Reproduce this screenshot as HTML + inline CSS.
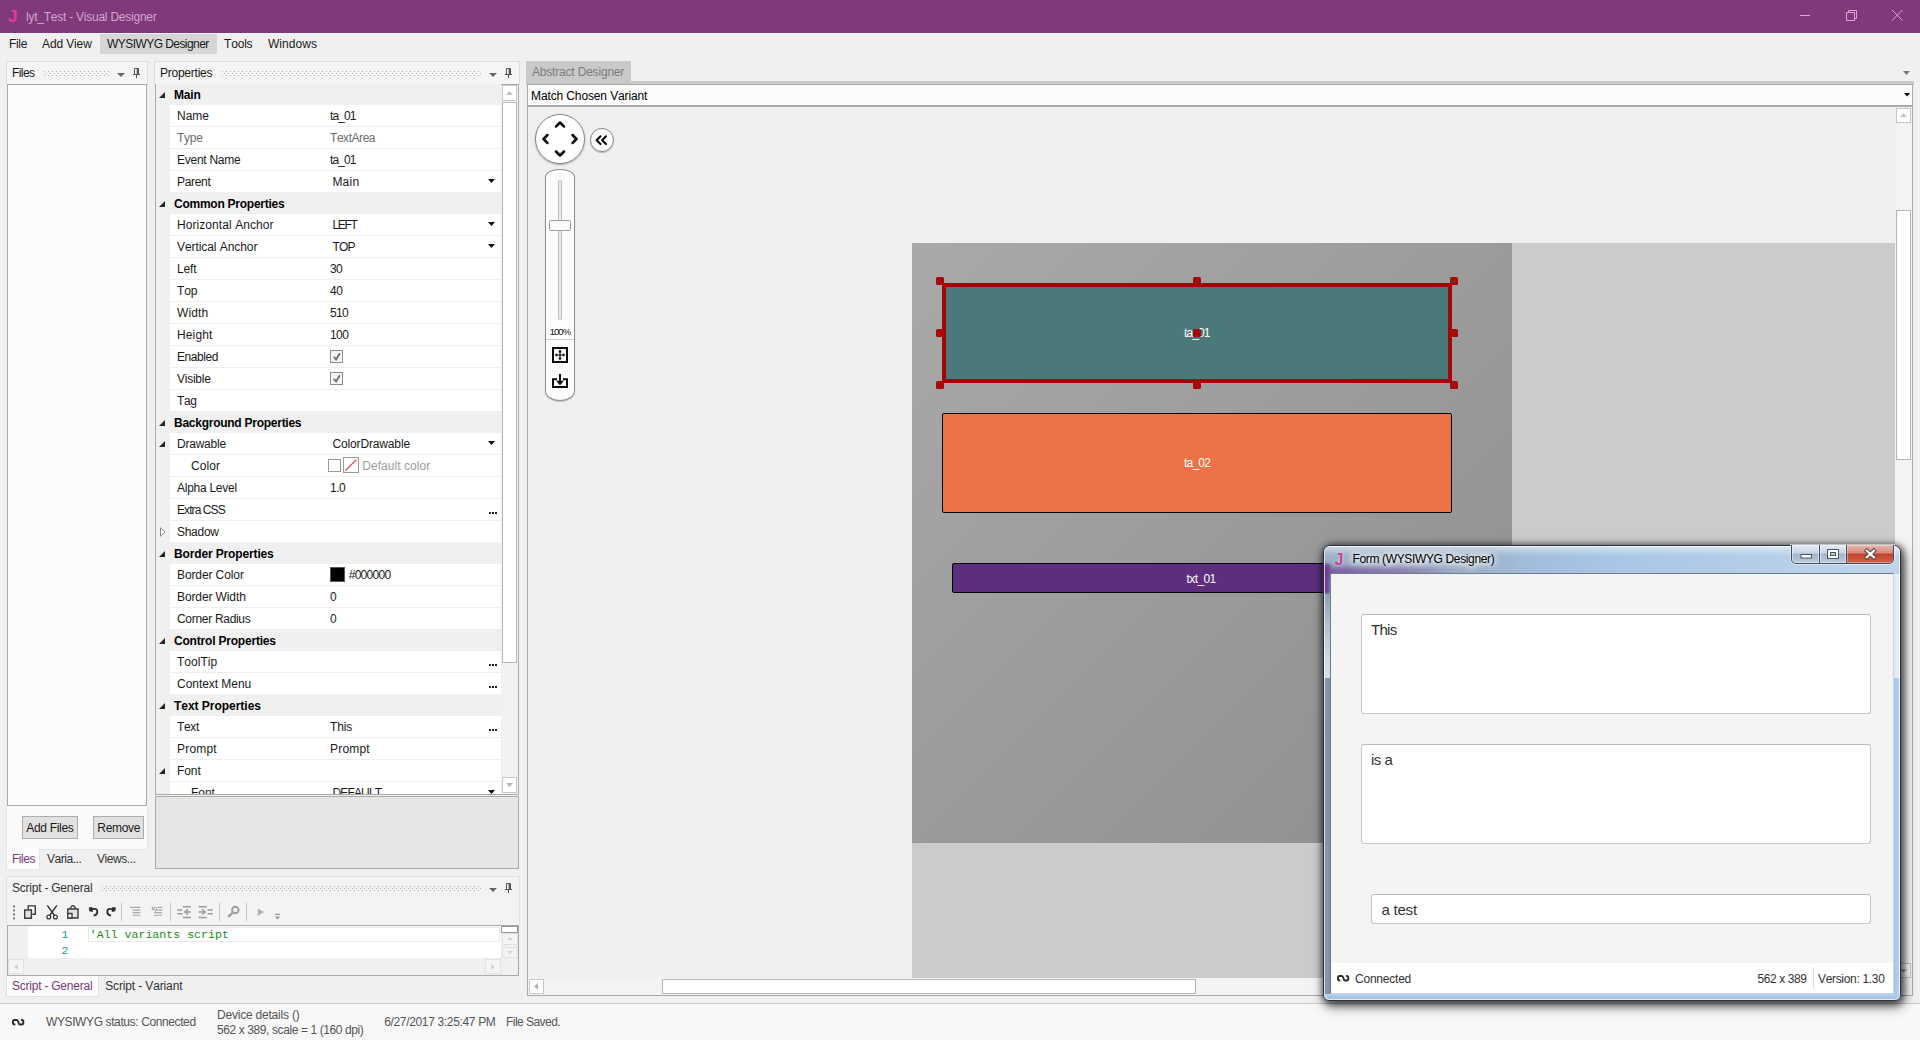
<!DOCTYPE html>
<html lang="en"><head><meta charset="utf-8"><title>lyt_Test - Visual Designer</title>
<style>
html,body{margin:0;padding:0;}
body{width:1920px;height:1040px;overflow:hidden;background:#f0f0f0;position:relative;
 font-family:"Liberation Sans",sans-serif;font-size:12px;color:#1a1a1a;font-kerning:none;}
.t{position:absolute;white-space:pre;font-kerning:none;}
div{box-sizing:border-box;}
svg{position:absolute;overflow:visible;}

</style></head>
<body>
<div style="position:absolute;left:0px;top:0px;width:1920px;height:33px;background:#80397b;"></div>
<div style="position:absolute;left:0px;top:33px;width:1920px;height:1px;background:#f8f3f7;"></div>
<span class="t" style="left:8.00px;top:7.00px;line-height:20px;font-size:17px;font-weight:bold;color:#e6399f;">J</span>
<span class="t" style="left:26.00px;top:8.60px;line-height:16px;color:#d5a4d0;letter-spacing:-0.239px;">lyt_Test - Visual Designer</span>
<svg style="left:1790px;top:0" width="130" height="33" viewBox="0 0 130 33" fill="none" stroke="#dca6d8" stroke-width="1"><path d="M10 15.5H20"/><path d="M56.5 12.5H64.5V20.5H56.5Z"/><path d="M58.5 12.5V10.5H66.5V18.5H64.5"/><path d="M102 10L112.5 20.5M112.5 10L102 20.5"/></svg>
<div style="position:absolute;left:100px;top:34px;width:117px;height:20px;background:#d6d6d6;"></div>
<span class="t" style="left:9.00px;top:36.00px;line-height:16px;letter-spacing:-0.328px;">File</span>
<span class="t" style="left:42.00px;top:36.00px;line-height:16px;letter-spacing:-0.125px;">Add View</span>
<span class="t" style="left:107.00px;top:36.00px;line-height:16px;letter-spacing:-0.562px;">WYSIWYG Designer</span>
<span class="t" style="left:224.00px;top:36.00px;line-height:16px;letter-spacing:-0.183px;">Tools</span>
<span class="t" style="left:268.00px;top:36.00px;line-height:16px;letter-spacing:0.036px;">Windows</span>
<svg width="0" height="0" style="left:0;top:0"><defs><pattern id="gp" width="4" height="4" patternUnits="userSpaceOnUse"><rect x="0" y="0" width="1" height="1" fill="#b2b2b2"/><rect x="2" y="2" width="1" height="1" fill="#b2b2b2"/></pattern></defs></svg>
<div style="position:absolute;left:6px;top:61px;width:142px;height:24px;background:#f5f5f5;border:1px solid #dedede;"></div>
<span class="t" style="left:12.00px;top:65.00px;line-height:16px;letter-spacing:-0.562px;">Files</span>
<svg style="left:44px;top:71px" width="66" height="5"><rect width="66" height="5" fill="url(#gp)"/></svg>
<svg style="left:117.3px;top:73px" width="8" height="4" viewBox="0 0 8 4"><path d="M0 0H8L4.0 4Z" fill="#666"/></svg>
<svg style="left:133px;top:68px" width="8" height="11" viewBox="0 0 8 11" fill="none" stroke="#555" stroke-width="1"><path d="M1.5 0.5H5.5V6.5H1.5Z" fill="none"/><path d="M4.5 0.5V6.5" stroke-width="1.6"/><path d="M0 6.5H7"/><path d="M3.5 7V10.200"/></svg>
<div style="position:absolute;left:7px;top:84px;width:140px;height:722px;background:#fcfcfc;border:1px solid #a9a9a9;"></div>
<div style="position:absolute;left:6px;top:806px;width:142px;height:44px;background:#fafafa;border:1px solid #e6e6e6;border-top:none;"></div>
<div style="position:absolute;left:22px;top:816px;width:56px;height:23px;background:#e1e1e1;border:1px solid #adadad;"></div>
<span class="t" style="left:26.30px;top:819.50px;line-height:16px;letter-spacing:-0.317px;">Add Files</span>
<div style="position:absolute;left:93px;top:816px;width:51px;height:23px;background:#e1e1e1;border:1px solid #adadad;"></div>
<span class="t" style="left:97.30px;top:819.50px;line-height:16px;letter-spacing:-0.302px;">Remove</span>
<div style="position:absolute;left:6px;top:849px;width:34px;height:21px;background:#fdfdfd;border:1px solid #e6e6e6;border-top:none;"></div>
<span class="t" style="left:12.00px;top:851.00px;line-height:16px;color:#7a3a78;letter-spacing:-0.463px;">Files</span>
<span class="t" style="left:47.00px;top:851.00px;line-height:16px;color:#333;letter-spacing:-0.454px;">Varia...</span>
<span class="t" style="left:97.00px;top:851.00px;line-height:16px;color:#333;letter-spacing:-0.436px;">Views...</span>
<div style="position:absolute;left:154px;top:61px;width:366px;height:24px;background:#f5f5f5;border:1px solid #dedede;"></div>
<span class="t" style="left:160.00px;top:65.00px;line-height:16px;letter-spacing:-0.244px;">Properties</span>
<svg style="left:222px;top:71px" width="260" height="5"><rect width="260" height="5" fill="url(#gp)"/></svg>
<svg style="left:488.5px;top:73px" width="8" height="4" viewBox="0 0 8 4"><path d="M0 0H8L4.0 4Z" fill="#666"/></svg>
<svg style="left:505px;top:68px" width="8" height="11" viewBox="0 0 8 11" fill="none" stroke="#555" stroke-width="1"><path d="M1.5 0.5H5.5V6.5H1.5Z" fill="none"/><path d="M4.5 0.5V6.5" stroke-width="1.6"/><path d="M0 6.5H7"/><path d="M3.5 7V10.200"/></svg>
<div style="position:absolute;left:155px;top:84px;width:364px;height:711px;background:#f0f0f0;border:1px solid #a9a9a9;"></div>
<div style="position:absolute;left:0px;top:0px;width:1920px;height:795px;overflow:hidden;background:none;pointer-events:none;"><div style="position:absolute;left:156px;top:84px;width:345px;height:21px;background:#f0f0f0;"></div><svg style="left:159px;top:92px" width="6" height="6" viewBox="0 0 6 6"><path d="M6 0V6H0Z" fill="#262626"/></svg><span class="t" style="left:174.00px;top:87.00px;line-height:16px;font-weight:bold;color:#000;letter-spacing:-0.169px;">Main</span><div style="position:absolute;left:170px;top:105px;width:331px;height:22px;background:#fff;border-bottom:1px solid #efefef;"></div><span class="t" style="left:177.00px;top:108.00px;line-height:16px;color:#1a1a1a;letter-spacing:-0.016px;">Name</span><span class="t" style="left:330.00px;top:108.00px;line-height:16px;color:#1a1a1a;letter-spacing:-0.875px;">ta_01</span><div style="position:absolute;left:170px;top:127px;width:331px;height:22px;background:#fff;border-bottom:1px solid #efefef;"></div><span class="t" style="left:177.00px;top:130.00px;line-height:16px;color:#6d6d6d;letter-spacing:-0.275px;">Type</span><span class="t" style="left:330.00px;top:130.00px;line-height:16px;color:#6d6d6d;letter-spacing:-0.452px;">TextArea</span><div style="position:absolute;left:170px;top:149px;width:331px;height:22px;background:#fff;border-bottom:1px solid #efefef;"></div><span class="t" style="left:177.00px;top:152.00px;line-height:16px;color:#1a1a1a;letter-spacing:-0.267px;">Event Name</span><span class="t" style="left:330.00px;top:152.00px;line-height:16px;color:#1a1a1a;letter-spacing:-0.875px;">ta_01</span><div style="position:absolute;left:170px;top:171px;width:331px;height:22px;background:#fff;border-bottom:1px solid #efefef;"></div><span class="t" style="left:177.00px;top:174.00px;line-height:16px;color:#1a1a1a;letter-spacing:-0.321px;">Parent</span><span class="t" style="left:332.40px;top:174.00px;line-height:16px;letter-spacing:0.234px;">Main</span><svg style="left:488px;top:179px" width="7" height="4" viewBox="0 0 7 4"><path d="M0 0H7L3.5 4Z" fill="#111"/></svg><div style="position:absolute;left:156px;top:193px;width:345px;height:21px;background:#f0f0f0;"></div><svg style="left:159px;top:201px" width="6" height="6" viewBox="0 0 6 6"><path d="M6 0V6H0Z" fill="#262626"/></svg><span class="t" style="left:174.00px;top:196.00px;line-height:16px;font-weight:bold;color:#000;letter-spacing:-0.249px;">Common Properties</span><div style="position:absolute;left:170px;top:214px;width:331px;height:22px;background:#fff;border-bottom:1px solid #efefef;"></div><span class="t" style="left:177.00px;top:217.00px;line-height:16px;color:#1a1a1a;letter-spacing:0.071px;">Horizontal Anchor</span><span class="t" style="left:332.40px;top:217.00px;line-height:16px;letter-spacing:-1.284px;">LEFT</span><svg style="left:488px;top:222px" width="7" height="4" viewBox="0 0 7 4"><path d="M0 0H7L3.5 4Z" fill="#111"/></svg><div style="position:absolute;left:170px;top:236px;width:331px;height:22px;background:#fff;border-bottom:1px solid #efefef;"></div><span class="t" style="left:177.00px;top:239.00px;line-height:16px;color:#1a1a1a;letter-spacing:-0.068px;">Vertical Anchor</span><span class="t" style="left:332.40px;top:239.00px;line-height:16px;letter-spacing:-0.816px;">TOP</span><svg style="left:488px;top:244px" width="7" height="4" viewBox="0 0 7 4"><path d="M0 0H7L3.5 4Z" fill="#111"/></svg><div style="position:absolute;left:170px;top:258px;width:331px;height:22px;background:#fff;border-bottom:1px solid #efefef;"></div><span class="t" style="left:177.00px;top:261.00px;line-height:16px;color:#1a1a1a;letter-spacing:-0.138px;">Left</span><span class="t" style="left:330.00px;top:261.00px;line-height:16px;color:#1a1a1a;letter-spacing:-0.600px;">30</span><div style="position:absolute;left:170px;top:280px;width:331px;height:22px;background:#fff;border-bottom:1px solid #efefef;"></div><span class="t" style="left:177.00px;top:283.00px;line-height:16px;color:#1a1a1a;letter-spacing:-0.164px;">Top</span><span class="t" style="left:330.00px;top:283.00px;line-height:16px;color:#1a1a1a;letter-spacing:-0.450px;">40</span><div style="position:absolute;left:170px;top:302px;width:331px;height:22px;background:#fff;border-bottom:1px solid #efefef;"></div><span class="t" style="left:177.00px;top:305.00px;line-height:16px;color:#1a1a1a;letter-spacing:0.110px;">Width</span><span class="t" style="left:330.00px;top:305.00px;line-height:16px;color:#1a1a1a;letter-spacing:-0.650px;">510</span><div style="position:absolute;left:170px;top:324px;width:331px;height:22px;background:#fff;border-bottom:1px solid #efefef;"></div><span class="t" style="left:177.00px;top:327.00px;line-height:16px;color:#1a1a1a;letter-spacing:0.138px;">Height</span><span class="t" style="left:330.00px;top:327.00px;line-height:16px;color:#1a1a1a;letter-spacing:-0.550px;">100</span><div style="position:absolute;left:170px;top:346px;width:331px;height:22px;background:#fff;border-bottom:1px solid #efefef;"></div><span class="t" style="left:177.00px;top:349.00px;line-height:16px;color:#1a1a1a;letter-spacing:-0.448px;">Enabled</span><div style="position:absolute;left:330px;top:350px;width:13px;height:13px;background:#f4f4f4;border:1px solid #8e8e8e;"></div><svg style="left:332px;top:352px" width="10" height="10" viewBox="0 0 10 10"><path d="M1.800 4.800L4.100 7.400L7.800 1.200" fill="none" stroke="#707070" stroke-width="1.900"/></svg><div style="position:absolute;left:170px;top:368px;width:331px;height:22px;background:#fff;border-bottom:1px solid #efefef;"></div><span class="t" style="left:177.00px;top:371.00px;line-height:16px;color:#1a1a1a;letter-spacing:-0.248px;">Visible</span><div style="position:absolute;left:330px;top:372px;width:13px;height:13px;background:#f4f4f4;border:1px solid #8e8e8e;"></div><svg style="left:332px;top:374px" width="10" height="10" viewBox="0 0 10 10"><path d="M1.800 4.800L4.100 7.400L7.800 1.200" fill="none" stroke="#707070" stroke-width="1.900"/></svg><div style="position:absolute;left:170px;top:390px;width:331px;height:22px;background:#fff;border-bottom:1px solid #efefef;"></div><span class="t" style="left:177.00px;top:393.00px;line-height:16px;color:#1a1a1a;letter-spacing:-0.364px;">Tag</span><div style="position:absolute;left:156px;top:412px;width:345px;height:21px;background:#f0f0f0;"></div><svg style="left:159px;top:420px" width="6" height="6" viewBox="0 0 6 6"><path d="M6 0V6H0Z" fill="#262626"/></svg><span class="t" style="left:174.00px;top:415.00px;line-height:16px;font-weight:bold;color:#000;letter-spacing:-0.258px;">Background Properties</span><div style="position:absolute;left:170px;top:433px;width:331px;height:22px;background:#fff;border-bottom:1px solid #efefef;"></div><span class="t" style="left:177.00px;top:436.00px;line-height:16px;color:#1a1a1a;letter-spacing:-0.227px;">Drawable</span><span class="t" style="left:332.40px;top:436.00px;line-height:16px;letter-spacing:-0.138px;">ColorDrawable</span><svg style="left:488px;top:441px" width="7" height="4" viewBox="0 0 7 4"><path d="M0 0H7L3.5 4Z" fill="#111"/></svg><svg style="left:159px;top:441px" width="6" height="6" viewBox="0 0 6 6"><path d="M6 0V6H0Z" fill="#262626"/></svg><div style="position:absolute;left:170px;top:455px;width:331px;height:22px;background:#fff;border-bottom:1px solid #efefef;"></div><span class="t" style="left:191.00px;top:458.00px;line-height:16px;color:#1a1a1a;letter-spacing:0.062px;">Color</span><div style="position:absolute;left:328px;top:459px;width:13px;height:13px;background:#fff;border:1px solid #9a9a9a;"></div><div style="position:absolute;left:343px;top:457px;width:16px;height:16px;background:#fff;border:1px solid #9a9a9a;"></div><svg style="left:344px;top:458px" width="14" height="14" viewBox="0 0 14 14"><path d="M1.5 12.5L12.5 1.5" stroke="#e8414d" stroke-width="1.1"/></svg><span class="t" style="left:362.30px;top:458.00px;line-height:16px;color:#9d9d9d;letter-spacing:0.047px;">Default color</span><div style="position:absolute;left:170px;top:477px;width:331px;height:22px;background:#fff;border-bottom:1px solid #efefef;"></div><span class="t" style="left:177.00px;top:480.00px;line-height:16px;color:#1a1a1a;letter-spacing:-0.263px;">Alpha Level</span><span class="t" style="left:330.00px;top:480.00px;line-height:16px;color:#1a1a1a;letter-spacing:-0.525px;">1.0</span><div style="position:absolute;left:170px;top:499px;width:331px;height:22px;background:#fff;border-bottom:1px solid #efefef;"></div><span class="t" style="left:177.00px;top:502.00px;line-height:16px;color:#1a1a1a;letter-spacing:-0.917px;">Extra CSS</span><div style="position:absolute;left:489px;top:512px;width:2px;height:2px;background:#222;"></div><div style="position:absolute;left:492px;top:512px;width:2px;height:2px;background:#222;"></div><div style="position:absolute;left:495px;top:512px;width:2px;height:2px;background:#222;"></div><div style="position:absolute;left:170px;top:521px;width:331px;height:22px;background:#fff;border-bottom:1px solid #efefef;"></div><span class="t" style="left:177.00px;top:524.00px;line-height:16px;color:#1a1a1a;letter-spacing:-0.281px;">Shadow</span><svg style="left:160px;top:527px" width="6" height="10" viewBox="0 0 6 10"><path d="M0.5 0.8L5 5L0.5 9.2Z" fill="#fff" stroke="#8a8a8a" stroke-width="1"/></svg><div style="position:absolute;left:156px;top:543px;width:345px;height:21px;background:#f0f0f0;"></div><svg style="left:159px;top:551px" width="6" height="6" viewBox="0 0 6 6"><path d="M6 0V6H0Z" fill="#262626"/></svg><span class="t" style="left:174.00px;top:546.00px;line-height:16px;font-weight:bold;color:#000;letter-spacing:-0.140px;">Border Properties</span><div style="position:absolute;left:170px;top:564px;width:331px;height:22px;background:#fff;border-bottom:1px solid #efefef;"></div><span class="t" style="left:177.00px;top:567.00px;line-height:16px;color:#1a1a1a;letter-spacing:-0.104px;">Border Color</span><div style="position:absolute;left:330px;top:567px;width:15px;height:15px;background:#000;border:1px solid #555;"></div><span class="t" style="left:348.70px;top:567.00px;line-height:16px;letter-spacing:-0.707px;">#000000</span><div style="position:absolute;left:170px;top:586px;width:331px;height:22px;background:#fff;border-bottom:1px solid #efefef;"></div><span class="t" style="left:177.00px;top:589.00px;line-height:16px;color:#1a1a1a;letter-spacing:-0.109px;">Border Width</span><span class="t" style="left:330.00px;top:589.00px;line-height:16px;color:#1a1a1a;letter-spacing:-0.450px;">0</span><div style="position:absolute;left:170px;top:608px;width:331px;height:22px;background:#fff;border-bottom:1px solid #efefef;"></div><span class="t" style="left:177.00px;top:611.00px;line-height:16px;color:#1a1a1a;letter-spacing:-0.302px;">Corner Radius</span><span class="t" style="left:330.00px;top:611.00px;line-height:16px;color:#1a1a1a;letter-spacing:-0.450px;">0</span><div style="position:absolute;left:156px;top:630px;width:345px;height:21px;background:#f0f0f0;"></div><svg style="left:159px;top:638px" width="6" height="6" viewBox="0 0 6 6"><path d="M6 0V6H0Z" fill="#262626"/></svg><span class="t" style="left:174.00px;top:633.00px;line-height:16px;font-weight:bold;color:#000;letter-spacing:-0.198px;">Control Properties</span><div style="position:absolute;left:170px;top:651px;width:331px;height:22px;background:#fff;border-bottom:1px solid #efefef;"></div><span class="t" style="left:177.00px;top:654.00px;line-height:16px;color:#1a1a1a;letter-spacing:0.029px;">ToolTip</span><div style="position:absolute;left:489px;top:664px;width:2px;height:2px;background:#222;"></div><div style="position:absolute;left:492px;top:664px;width:2px;height:2px;background:#222;"></div><div style="position:absolute;left:495px;top:664px;width:2px;height:2px;background:#222;"></div><div style="position:absolute;left:170px;top:673px;width:331px;height:22px;background:#fff;border-bottom:1px solid #efefef;"></div><span class="t" style="left:177.00px;top:676.00px;line-height:16px;color:#1a1a1a;letter-spacing:-0.041px;">Context Menu</span><div style="position:absolute;left:489px;top:686px;width:2px;height:2px;background:#222;"></div><div style="position:absolute;left:492px;top:686px;width:2px;height:2px;background:#222;"></div><div style="position:absolute;left:495px;top:686px;width:2px;height:2px;background:#222;"></div><div style="position:absolute;left:156px;top:695px;width:345px;height:21px;background:#f0f0f0;"></div><svg style="left:159px;top:703px" width="6" height="6" viewBox="0 0 6 6"><path d="M6 0V6H0Z" fill="#262626"/></svg><span class="t" style="left:174.00px;top:698.00px;line-height:16px;font-weight:bold;color:#000;letter-spacing:-0.029px;">Text Properties</span><div style="position:absolute;left:170px;top:716px;width:331px;height:22px;background:#fff;border-bottom:1px solid #efefef;"></div><span class="t" style="left:177.00px;top:719.00px;line-height:16px;color:#1a1a1a;letter-spacing:-0.354px;">Text</span><span class="t" style="left:330.00px;top:719.00px;line-height:16px;color:#1a1a1a;letter-spacing:-0.172px;">This</span><div style="position:absolute;left:489px;top:729px;width:2px;height:2px;background:#222;"></div><div style="position:absolute;left:492px;top:729px;width:2px;height:2px;background:#222;"></div><div style="position:absolute;left:495px;top:729px;width:2px;height:2px;background:#222;"></div><div style="position:absolute;left:170px;top:738px;width:331px;height:22px;background:#fff;border-bottom:1px solid #efefef;"></div><span class="t" style="left:177.00px;top:741.00px;line-height:16px;color:#1a1a1a;letter-spacing:0.198px;">Prompt</span><span class="t" style="left:330.00px;top:741.00px;line-height:16px;color:#1a1a1a;letter-spacing:0.198px;">Prompt</span><div style="position:absolute;left:170px;top:760px;width:331px;height:22px;background:#fff;border-bottom:1px solid #efefef;"></div><span class="t" style="left:177.00px;top:763.00px;line-height:16px;color:#1a1a1a;letter-spacing:-0.097px;">Font</span><svg style="left:159px;top:768px" width="6" height="6" viewBox="0 0 6 6"><path d="M6 0V6H0Z" fill="#262626"/></svg><div style="position:absolute;left:170px;top:782px;width:331px;height:22px;background:#fff;border-bottom:1px solid #efefef;"></div><span class="t" style="left:191.00px;top:785.00px;line-height:16px;color:#1a1a1a;letter-spacing:-0.047px;">Font</span><span class="t" style="left:332.40px;top:785.00px;line-height:16px;letter-spacing:-0.818px;">DEFAULT</span><svg style="left:488px;top:790px" width="7" height="4" viewBox="0 0 7 4"><path d="M0 0H7L3.5 4Z" fill="#111"/></svg></div>
<div style="position:absolute;left:502px;top:85px;width:16px;height:709px;background:#f2f2f2;"></div>
<div style="position:absolute;left:502px;top:85px;width:15px;height:16px;background:#fff;border:1px solid #c8c8c8;"></div>
<svg style="left:506px;top:91px" width="7" height="4" viewBox="0 0 7 4"><path d="M0 4H7L3.5 0Z" fill="#c2c2c2"/></svg>
<div style="position:absolute;left:502px;top:102px;width:15px;height:561px;background:#fff;border:1px solid #b5b5b5;"></div>
<div style="position:absolute;left:502px;top:777px;width:15px;height:16px;background:#fff;border:1px solid #c8c8c8;"></div>
<svg style="left:506px;top:783px" width="7" height="4" viewBox="0 0 7 4"><path d="M0 0H7L3.5 4Z" fill="#b5b5b5"/></svg>
<div style="position:absolute;left:155px;top:794px;width:364px;height:1px;background:#a9a9a9;"></div>
<div style="position:absolute;left:155px;top:796px;width:364px;height:73px;background:#e6e6e6;border:1px solid #a9a9a9;"></div>
<div style="position:absolute;left:6px;top:876px;width:514px;height:24px;background:#f3f3f3;border:1px solid #e2e2e2;border-bottom:none;"></div>
<span class="t" style="left:12.00px;top:880.00px;line-height:16px;color:#333;letter-spacing:-0.230px;">Script - General</span>
<svg style="left:102px;top:886px" width="380" height="5"><rect width="380" height="5" fill="url(#gp)"/></svg>
<svg style="left:488.5px;top:888px" width="8" height="4" viewBox="0 0 8 4"><path d="M0 0H8L4.0 4Z" fill="#666"/></svg>
<svg style="left:505px;top:883px" width="8" height="11" viewBox="0 0 8 11" fill="none" stroke="#555" stroke-width="1"><path d="M1.5 0.5H5.5V6.5H1.5Z" fill="none"/><path d="M4.5 0.5V6.5" stroke-width="1.6"/><path d="M0 6.5H7"/><path d="M3.5 7V10.200"/></svg>
<div style="position:absolute;left:6px;top:900px;width:514px;height:26px;background:#f3f3f3;border-left:1px solid #e2e2e2;border-right:1px solid #e2e2e2;"></div>
<svg style="left:7px;top:900px" width="300" height="24" viewBox="0 0 300 24" fill="none" stroke="#3a3a3a" stroke-width="1.2"><rect x="6" y="5.4" width="2" height="2" fill="#7e7e7e" stroke="none"/><rect x="6" y="9.4" width="2" height="2" fill="#7e7e7e" stroke="none"/><rect x="6" y="13.4" width="2" height="2" fill="#7e7e7e" stroke="none"/><rect x="6" y="17.4" width="2" height="2" fill="#7e7e7e" stroke="none"/><path d="M21.200 9.300V5.900H28.300V14.300H25.300" stroke-width="1.400"/><path d="M17.700 10H24.400V18.300H17.700Z" fill="#e2e2e2" stroke-width="1.400"/><path d="M40.300 5.400L47.400 15.200M49.900 5.400L42.800 15.200" stroke-width="1.500"/><circle cx="41.800" cy="17" r="1.900" stroke-width="1.300"/><circle cx="48.400" cy="17" r="1.900" stroke-width="1.300"/><path d="M60.800 9H71V18H60.800Z" fill="#e4e4e4" stroke-width="1.400"/><path d="M63.600 8.800V7.600Q65.900 4 68.200 7.600V8.800" stroke-width="1.400"/><path d="M60.800 13.500H65V18H60.800Z" fill="#fff" stroke-width="1.300"/><path d="M84.500 9.300Q90.600 7.600 90.300 12.300Q90 15 86.600 15.600" stroke-width="1.900" stroke="#2e2e2e"/><path d="M81.800 7.600L85.300 6.900L86 12L82.300 11.300Z" fill="#2e2e2e" stroke="none"/><path d="M106.100 9.300Q100 7.600 100.300 12.300Q100.600 15 104 15.600" stroke-width="1.900" stroke="#2e2e2e"/><path d="M108.800 7.600L105.300 6.900L104.600 12L108.300 11.300Z" fill="#2e2e2e" stroke="none"/><path d="M114.5 3V21" stroke="#c4c4c4" stroke-width="1"/><path d="M163.5 3V21" stroke="#c4c4c4" stroke-width="1"/><path d="M212.5 3V21" stroke="#c4c4c4" stroke-width="1"/><path d="M239.5 3V21" stroke="#c4c4c4" stroke-width="1"/><g stroke="#a6aaa6" stroke-width="1.100"><path d="M123 7.400H133.200M125.600 10.100H133.200M125.600 12.600H133.200M125.600 15.200H133.200"/><path d="M150.500 7.400H155.200M150.500 10.100H155.200M147.200 12.600H155.200M147.200 15.200H155.200"/><path d="M146.300 9.300Q148 6.300 149.700 8.300Q150.300 10 148 11.600"/><path d="M145.400 6.600V9.800H148.400"/></g><g stroke="#9c9c9c" stroke-width="1.500"><path d="M175.800 6.800H183.800M175.800 17.400H183.800M170.200 10H175.300M170.200 13.800H175.300M178.500 11.900H183.800"/><path d="M181 9.300L177.800 11.900L181 14.500" stroke-linejoin="miter"/></g><g stroke="#9c9c9c" stroke-width="1.500"><path d="M191.700 6.800H199.700M191.700 17.400H199.700M200.600 10H205.800M200.600 13.800H205.800M191.700 11.900H197.500"/><path d="M195 9.300L198.200 11.900L195 14.500" stroke-linejoin="miter"/></g><g stroke="#a0a0a0"><circle cx="228.300" cy="10" r="3.300" stroke-width="1.900"/><path d="M225.500 12.800L221.200 16.800" stroke-width="2.400"/></g><path d="M250.800 8.400V15.800L257 12.100Z" fill="#b0b0b0" stroke="none"/><path d="M268 14.300H273" stroke="#8e8e8e" stroke-width="1.100"/><path d="M268 16.600H273L270.500 19.600Z" fill="#8e8e8e" stroke="none"/></svg>
<div style="position:absolute;left:7px;top:925px;width:512px;height:51px;background:#fff;border:1px solid #a9a9a9;"></div>
<div style="position:absolute;left:8px;top:926px;width:20px;height:32px;background:#f0f0f0;"></div>
<div style="position:absolute;left:88px;top:927px;width:412px;height:15px;background:#fff;border:1px solid #eaeaea;"></div>
<span class="t" style="left:61.50px;top:927.45px;line-height:15.5px;font-size:11.5px;color:#2b91af;font-family:'Liberation Mono',monospace;">1</span>
<span class="t" style="left:61.50px;top:943.45px;line-height:15.5px;font-size:11.5px;color:#2b91af;font-family:'Liberation Mono',monospace;">2</span>
<span class="t" style="left:89.80px;top:927.45px;line-height:15.5px;font-size:11.5px;color:#1a8a1a;font-family:'Liberation Mono',monospace;letter-spacing:0.052px;">&#x27;All variants script</span>
<div style="position:absolute;left:501px;top:926px;width:17px;height:33px;background:#f0f0f0;"></div>
<div style="position:absolute;left:501px;top:926px;width:17px;height:7px;background:#fff;border:1px solid #969696;"></div>
<div style="position:absolute;left:502px;top:933px;width:16px;height:12px;background:#f4f4f4;border:1px solid #e2e2e2;"></div>
<svg style="left:507px;top:937px" width="6" height="3" viewBox="0 0 6 3"><path d="M0 3H6L3 0Z" fill="#d4d4d4"/></svg>
<div style="position:absolute;left:502px;top:947px;width:16px;height:11px;background:#f4f4f4;border:1px solid #e2e2e2;"></div>
<svg style="left:507px;top:951px" width="6" height="3" viewBox="0 0 6 3"><path d="M0 0H6L3 3Z" fill="#d4d4d4"/></svg>
<div style="position:absolute;left:8px;top:958px;width:510px;height:17px;background:#f0f0f0;"></div>
<div style="position:absolute;left:8px;top:959px;width:16px;height:15px;background:#f4f4f4;border:1px solid #e2e2e2;"></div>
<svg style="left:14px;top:964px" width="4" height="6" viewBox="0 0 4 6"><path d="M4 0V6L0 3Z" fill="#d4d4d4"/></svg>
<div style="position:absolute;left:485px;top:959px;width:16px;height:15px;background:#f4f4f4;border:1px solid #e2e2e2;"></div>
<svg style="left:491px;top:964px" width="4" height="6" viewBox="0 0 4 6"><path d="M0 0V6L4 3Z" fill="#d4d4d4"/></svg>
<div style="position:absolute;left:6px;top:976px;width:93px;height:21px;background:#fdfdfd;border:1px solid #e0e0e0;border-top:none;"></div>
<span class="t" style="left:12.00px;top:978.00px;line-height:16px;color:#7a3a78;letter-spacing:-0.230px;">Script - General</span>
<span class="t" style="left:105.20px;top:978.00px;line-height:16px;color:#333;letter-spacing:-0.136px;">Script - Variant</span>
<div style="position:absolute;left:0px;top:1003px;width:1920px;height:37px;background:#f8f8f8;border-top:1px solid #c8c8c8;"></div>
<svg style="left:11.8px;top:1018.8px" width="12.3" height="6.5" viewBox="0 0 12.3 6.5" fill="none" stroke="#2b2b2b" stroke-width="1.900"><path d="M3.300 5.550H2.700A1.800 2.300 0 0 1 2.700 0.950H4.900C6.700 0.950 6.100 5.550 8 5.550H9.600A1.800 2.300 0 0 0 9.600 0.950H9.100"/></svg>
<span class="t" style="left:46.00px;top:1014.00px;line-height:16px;color:#555;letter-spacing:-0.389px;">WYSIWYG status: Connected</span>
<span class="t" style="left:217.00px;top:1007.00px;line-height:16px;color:#555;letter-spacing:-0.209px;">Device details ()</span>
<span class="t" style="left:217.00px;top:1022.00px;line-height:16px;color:#555;letter-spacing:-0.402px;">562 x 389, scale = 1 (160 dpi)</span>
<span class="t" style="left:384.20px;top:1014.00px;line-height:16px;color:#555;letter-spacing:-0.338px;">6/27/2017 3:25:47 PM</span>
<span class="t" style="left:506.00px;top:1014.00px;line-height:16px;color:#555;letter-spacing:-0.543px;">File Saved.</span>
<div style="position:absolute;left:526px;top:61px;width:105px;height:21px;background:#c9c9c9;"></div>
<span class="t" style="left:532.00px;top:64.00px;line-height:16px;color:#7d7d7d;letter-spacing:-0.189px;">Abstract Designer</span>
<div style="position:absolute;left:526px;top:81px;width:1388px;height:4px;background:#c9c9c9;"></div>
<svg style="left:1902.5px;top:71px" width="7" height="4" viewBox="0 0 7 4"><path d="M0 0H7L3.5 4Z" fill="#7a7a7a"/></svg>
<div style="position:absolute;left:527px;top:84px;width:1386px;height:912px;background:#f0f0f0;border:1px solid #a9a9a9;"></div>
<div style="position:absolute;left:527px;top:84px;width:1386px;height:23px;background:#fcfcfc;border:1px solid #a9a9a9;border-bottom:2px solid #a9a9a9;"></div>
<span class="t" style="left:531.00px;top:87.50px;line-height:16px;color:#000;letter-spacing:-0.121px;">Match Chosen Variant</span>
<svg style="left:1903.5px;top:93px" width="6" height="3.5" viewBox="0 0 6 3.5"><path d="M0 0H6L3.0 3.5Z" fill="#000"/></svg>
<div style="position:absolute;left:912px;top:243px;width:983px;height:735px;background:#cbcbcb;"></div>
<div style="position:absolute;left:912px;top:243px;width:600px;height:600px;background:linear-gradient(135deg,#a9a9a9 0%,#9b9b9b 50%,#8e8e8e 100%);"></div>
<div style="position:absolute;left:942px;top:283px;width:510px;height:100px;background:#497979;border:4px solid #a00808;"></div>
<span class="t" style="left:1184.00px;top:325.00px;line-height:16px;color:#fff;letter-spacing:-0.875px;">ta_01</span>
<div style="position:absolute;left:936px;top:277px;width:8px;height:8px;background:#a80a0a;border-radius:1.5px;"></div>
<div style="position:absolute;left:936px;top:329px;width:8px;height:8px;background:#a80a0a;border-radius:1.5px;"></div>
<div style="position:absolute;left:936px;top:381px;width:8px;height:8px;background:#a80a0a;border-radius:1.5px;"></div>
<div style="position:absolute;left:1193px;top:277px;width:8px;height:8px;background:#a80a0a;border-radius:1.5px;"></div>
<div style="position:absolute;left:1193px;top:329px;width:8px;height:8px;background:#a80a0a;border-radius:1.5px;"></div>
<div style="position:absolute;left:1193px;top:381px;width:8px;height:8px;background:#a80a0a;border-radius:1.5px;"></div>
<div style="position:absolute;left:1450px;top:277px;width:8px;height:8px;background:#a80a0a;border-radius:1.5px;"></div>
<div style="position:absolute;left:1450px;top:329px;width:8px;height:8px;background:#a80a0a;border-radius:1.5px;"></div>
<div style="position:absolute;left:1450px;top:381px;width:8px;height:8px;background:#a80a0a;border-radius:1.5px;"></div>
<div style="position:absolute;left:942px;top:413px;width:510px;height:100px;background:#eb7347;border:1px solid #000;border-radius:2px;"></div>
<span class="t" style="left:1184.00px;top:455.00px;line-height:16px;color:#fff;letter-spacing:-0.775px;">ta_02</span>
<div style="position:absolute;left:952px;top:563px;width:500px;height:30px;background:#5d2e7e;border:1px solid #000;border-radius:2px;"></div>
<span class="t" style="left:1186.50px;top:570.50px;line-height:16px;color:#fff;letter-spacing:-0.583px;">txt_01</span>
<div style="position:absolute;left:535px;top:114px;width:50px;height:50px;border-radius:50%;background:radial-gradient(circle at 50% 45%,#ffffff 0%,#ffffff 72%,#ededed 90%,#dcdcdc 100%);border:1px solid #858585;box-shadow:0 1px 2px rgba(0,0,0,.30);"></div>
<svg style="left:535px;top:114px" width="50" height="50" viewBox="0 0 50 50" fill="none" stroke="#0c0c0c" stroke-width="2.5" stroke-linecap="round" stroke-linejoin="round"><path d="M21 12.500L25 8.500L29 12.500"/><path d="M21 37.500L25 41.500L29 37.500"/><path d="M12.500 21L8.500 25L12.500 29"/><path d="M37.500 21L41.500 25L37.500 29"/></svg>
<div style="position:absolute;left:590px;top:128px;width:24px;height:24px;border-radius:50%;background:radial-gradient(circle at 50% 45%,#ffffff 70%,#ececec 100%);border:1px solid #858585;box-shadow:0 1px 1px rgba(0,0,0,.25);"></div>
<svg style="left:590px;top:128px" width="24" height="24" viewBox="0 0 24 24" fill="none" stroke="#0c0c0c" stroke-width="2.1" stroke-linecap="round" stroke-linejoin="round"><path d="M10.500 8.300L6.600 12.200L10.500 16.100"/><path d="M16 8.300L12.100 12.200L16 16.100"/></svg>
<div style="position:absolute;left:545px;top:169px;width:30px;height:232px;border-radius:15px/8px;border-bottom-left-radius:15px 10px;border-bottom-right-radius:15px 10px;background:#fdfdfd;border:1px solid #8e8e8e;box-shadow:0 1px 1px rgba(0,0,0,.18);"></div>
<div style="position:absolute;left:558px;top:180px;width:4px;height:140px;background:#ededed;border:1px solid #bcbcbc;border-radius:2px;"></div>
<div style="position:absolute;left:549px;top:220px;width:22px;height:11px;background:#fafafa;border:1px solid #9c9c9c;border-radius:1.5px;"></div>
<span class="t" style="left:549.70px;top:325.45px;line-height:13.5px;font-size:9.5px;color:#111;letter-spacing:-0.948px;">100%</span>
<div style="position:absolute;left:546px;top:339px;width:28px;height:1px;background:#cfcfcf;"></div>
<svg style="left:552px;top:347px" width="16" height="16" viewBox="0 0 16 16" fill="none" stroke="#0c0c0c" stroke-width="2"><rect x="1" y="1" width="14" height="14"/><path d="M8 4V12M4 8H12" stroke-width="1.200"/><path d="M8 2.600L6.200 5.200H9.800ZM8 13.400L6.200 10.800H9.800ZM2.600 8L5.200 6.200V9.800ZM13.400 8L10.800 6.200V9.800Z" fill="#0c0c0c" stroke="none"/></svg>
<svg style="left:552px;top:374px" width="16" height="14" viewBox="0 0 16 14" fill="none" stroke="#0c0c0c" stroke-width="2"><path d="M5 5.300H1V12.900H15V5.300H11"/><path d="M8 0V8"/><path d="M8 11.500L4.200 6.800H11.800Z" fill="#0c0c0c" stroke="none"/></svg>
<div style="position:absolute;left:1895px;top:107px;width:17px;height:871px;background:#f3f3f3;"></div>
<div style="position:absolute;left:1896px;top:108px;width:15px;height:15px;background:#fff;border:1px solid #c8c8c8;"></div>
<svg style="left:1900px;top:113px" width="7" height="4" viewBox="0 0 7 4"><path d="M0 4H7L3.500 0Z" fill="#c2c2c2"/></svg>
<div style="position:absolute;left:1896px;top:210px;width:15px;height:250px;background:#fff;border:1px solid #b5b5b5;"></div>
<div style="position:absolute;left:1896px;top:963px;width:15px;height:15px;background:#fff;border:1px solid #c8c8c8;"></div>
<svg style="left:1900px;top:969px" width="7" height="4" viewBox="0 0 7 4"><path d="M0 0H7L3.500 4Z" fill="#b5b5b5"/></svg>
<div style="position:absolute;left:528px;top:978px;width:1384px;height:17px;background:#f3f3f3;"></div>
<div style="position:absolute;left:529px;top:979px;width:15px;height:15px;background:#fff;border:1px solid #c8c8c8;"></div>
<svg style="left:534px;top:983px" width="4" height="7" viewBox="0 0 4 7"><path d="M4 0V7L0 3.500Z" fill="#b5b5b5"/></svg>
<div style="position:absolute;left:662px;top:979px;width:534px;height:15px;background:#fff;border:1px solid #b5b5b5;"></div>
<div style="position:absolute;left:1323px;top:545px;width:578px;height:456px;border-radius:8px 8px 7px 7px;box-shadow:2px 5px 12px 1px rgba(0,0,0,.50), 1px 1px 6px 2px rgba(0,0,0,.50);"></div>
<div style="position:absolute;left:1323px;top:545px;width:578px;height:456px;border-radius:7px 7px 6px 6px;border:1px solid #2c333d;background:linear-gradient(90deg,#a3b7d0 0%,#9fb9d8 30%,#a9c6e6 50%,#b6cfea 80%,#bfd5ec 100%);overflow:hidden;"><div style="position:absolute;left:0px;top:0px;width:200px;height:29px;background:linear-gradient(90deg,#9eafc6 0%,#9db0c9 75%,rgba(157,176,201,0) 100%);"></div><div style="position:absolute;left:0px;top:0px;width:576px;height:10px;background:linear-gradient(180deg,rgba(255,255,255,.55),rgba(255,255,255,0));"></div><div style="position:absolute;left:-4px;top:21px;width:138px;height:10px;background:linear-gradient(90deg,rgba(104,50,140,.7),rgba(118,78,150,.42) 70%,rgba(120,80,150,0));filter:blur(2.5px);"></div><div style="position:absolute;left:-2px;top:18px;width:8px;height:30px;background:#6f4296;filter:blur(1.5px);"></div><div style="position:absolute;left:0px;top:48px;width:6px;height:84px;background:linear-gradient(180deg,#8e9fb8 0%,#b4bfcd 35%,#d0d7e0 75%,#d8dde5 100%);"></div><div style="position:absolute;left:0px;top:132px;width:6px;height:322px;background:linear-gradient(90deg,#8a9cb4,#7d90a9);"></div><div style="position:absolute;left:570px;top:28px;width:6px;height:104px;background:linear-gradient(90deg,#dde6f0,#eef3f8);"></div><div style="position:absolute;left:570px;top:132px;width:6px;height:322px;background:linear-gradient(90deg,#a9c5e6,#b9d2ee);"></div><div style="position:absolute;left:0px;top:448px;width:576px;height:6px;background:linear-gradient(180deg,#b5cfee,#9fbde0);"></div><div style="position:absolute;left:0px;top:0px;width:576px;height:454px;border-radius:6px;border:1px solid rgba(255,255,255,.65);"></div></div>
<div style="position:absolute;left:1791px;top:545px;width:103px;height:19px;border:1px solid #414c5b;border-top:none;border-radius:0 0 5px 5px;overflow:hidden;background:linear-gradient(180deg,#e4ebf3 0%,#c9d5e4 45%,#a3b5cc 50%,#bccbdf 100%);box-shadow:0 0 0 1px rgba(255,255,255,.5);"><div style="position:absolute;left:54px;top:0px;width:48px;height:18px;background:linear-gradient(180deg,#e6b8af 0%,#d8867a 45%,#c2402a 50%,#d0654c 100%);border-left:1px solid #414c5b;box-shadow:inset 0 0 0 1px rgba(255,255,255,.35);"></div><div style="position:absolute;left:27px;top:0px;width:1px;height:18px;background:#414c5b;"></div><div style="position:absolute;left:0px;top:0px;width:27px;height:18px;box-shadow:inset 0 0 0 1px rgba(255,255,255,.45);"></div><div style="position:absolute;left:28px;top:0px;width:26px;height:18px;box-shadow:inset 0 0 0 1px rgba(255,255,255,.45);"></div></div>
<svg style="left:1791px;top:545px" width="104" height="20" viewBox="0 0 104 20" fill="none"><rect x="10" y="9.500" width="10.500" height="3.500" fill="#fff" stroke="#4a5565"/><rect x="36.500" y="4.500" width="11" height="9" fill="#fff" stroke="#4a5565"/><rect x="39.500" y="7.500" width="5" height="3" fill="#b9c6d6" stroke="#4a5565"/><path d="M75.800 5.800L82.800 12.200M82.800 5.800L75.800 12.200" stroke="#54433f" stroke-width="4.200" stroke-linecap="square"/><path d="M75.800 5.800L82.800 12.200M82.800 5.800L75.800 12.200" stroke="#fff" stroke-width="2.300" stroke-linecap="square"/></svg>
<span class="t" style="left:1334.50px;top:549.50px;line-height:20px;font-size:16px;font-weight:bold;color:#cf4299;text-shadow:0 0 3px rgba(255,255,255,.6);">J</span>
<span class="t" style="left:1352.50px;top:550.50px;line-height:16px;color:#000;letter-spacing:-0.356px;text-shadow:0 0 5px #fff,0 0 7px #fff,0 0 9px rgba(255,255,255,.95),0 0 12px rgba(255,255,255,.8);">Form (WYSIWYG Designer)</span>
<div style="position:absolute;left:1330px;top:573px;width:564px;height:421px;background:#f4f4f4;border:1px solid #6d7b8c;border-right-color:#c9d6e4;border-bottom-color:#c9d6e4;"></div>
<div style="position:absolute;left:1361px;top:614px;width:510px;height:100px;background:#fff;border:1px solid #c6c6c6;border-top-color:#b9b9b9;border-radius:3px;"></div>
<span class="t" style="left:1371.00px;top:621.00px;line-height:18px;font-size:15px;color:#333;letter-spacing:-0.715px;">This</span>
<div style="position:absolute;left:1361px;top:744px;width:510px;height:100px;background:#fff;border:1px solid #c6c6c6;border-top-color:#b9b9b9;border-radius:3px;"></div>
<span class="t" style="left:1371.00px;top:751.00px;line-height:18px;font-size:15px;color:#333;letter-spacing:-0.534px;">is a</span>
<div style="position:absolute;left:1371px;top:894px;width:500px;height:30px;background:#fff;border:1px solid #c6c6c6;border-top-color:#b9b9b9;border-radius:3px;"></div>
<span class="t" style="left:1381.40px;top:901.00px;line-height:18px;font-size:15px;color:#333;letter-spacing:-0.205px;">a test</span>
<div style="position:absolute;left:1331px;top:963px;width:562px;height:30px;background:#fff;"></div>
<svg style="left:1337px;top:974.8px" width="12.3" height="6.5" viewBox="0 0 12.3 6.5" fill="none" stroke="#2b2b2b" stroke-width="1.900"><path d="M3.300 5.550H2.700A1.800 2.300 0 0 1 2.700 0.950H4.900C6.700 0.950 6.100 5.550 8 5.550H9.600A1.800 2.300 0 0 0 9.600 0.950H9.100"/></svg>
<span class="t" style="left:1355.00px;top:970.50px;line-height:16px;color:#333;letter-spacing:-0.222px;">Connected</span>
<span class="t" style="left:1757.50px;top:970.50px;line-height:16px;color:#333;letter-spacing:-0.417px;">562 x 389</span>
<div style="position:absolute;left:1813px;top:967px;width:1px;height:22px;background:#dcdcdc;"></div>
<span class="t" style="left:1818.00px;top:970.50px;line-height:16px;color:#333;letter-spacing:-0.326px;">Version: 1.30</span>
</body></html>
